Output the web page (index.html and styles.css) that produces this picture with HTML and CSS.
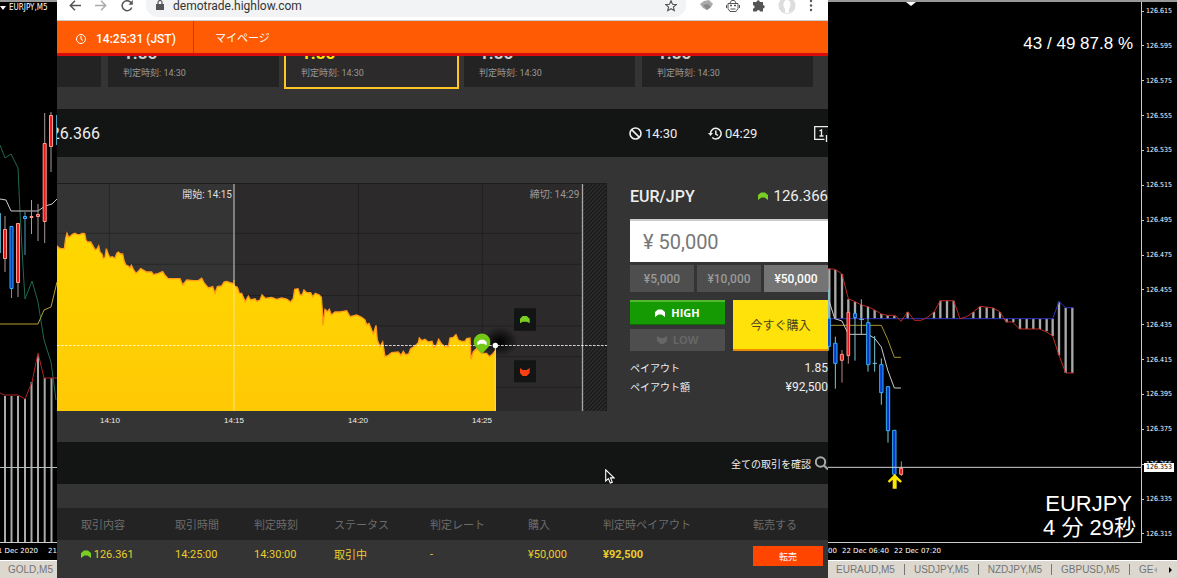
FILE: index.html
```html
<!DOCTYPE html>
<html lang="ja">
<head>
<meta charset="utf-8">
<title>EURJPY M5</title>
<link rel="stylesheet" href="styles.css">
</head>
<body>
<svg class="defs" aria-hidden="true">
  <symbol id="up" viewBox="0 0 10 8"><path d="M0 3L3 0.5H7L10 3V8L6.5 5.500H3.500L0 8Z" fill="currentColor"/></symbol>
  <symbol id="down" viewBox="0 0 10 8"><path d="M0 5L3.500 8H6.500L10 5V0L6.500 2H3.500L0 0Z" fill="currentColor"/></symbol>
</svg>
<div class="desktop">
  <section class="terminal terminal-left">
    <div class="terminal-title"><span class="caret"></span>EURJPY,M5</div>
    <svg class="left-plot" viewBox="0 14 57 528" preserveAspectRatio="xMinYMax slice">
      <g stroke="#aaa" stroke-width="2"><path d="M5 396V542M11.5 396V542M18 396V542M25 399V542M31.5 382V542M38 355V542M44.7 378V542M51.5 378V542"/></g>
      <g fill="none" stroke-width="1">
        <path d="M0 145L5 158L11 154L18 168L20 212L23 267L25 299L32 281L38 302L44 340L51 362L56 400" stroke="#1f6a50"/>
        <path d="M0 199L6 200L11 211H38L45 206L52 204L57 199" stroke="#ccc"/>
        <path d="M0 324H38L44 310L51 307L57 282" stroke="#b5a02c"/>
        <path d="M0 393L4 395H18L25 399L32 382L38 353L44 378H57" stroke="#b02222"/>
        <path d="M0 467.5H57" stroke="#b4bdbd"/>
        <path d="M5 216V272M18 223V297M31.5 200V234M38 204V241M44.7 113V243M51 112V172" stroke="#a99"/>
        <path d="M.5 213V253M11.5 226V298M25 212V255M56.5 115V145" stroke="#4aa0b8"/>
      </g>
      <g fill="#e8191c" stroke="#ff9c90" stroke-width="1"><path d="M3.500 229.500h3v29h-3zM16.500 223.500h3v59h-3zM30 216.500h3v1h-3zM36.500 214.500h3v2h-3zM43.200 143.500h3v78h-3zM49.500 115.500h3v31h-3z"/></g>
      <g fill="#0834cc" stroke="#35b4f0" stroke-width="1"><path d="M10 226.500h3v62h-3zM23.500 216.500h3v2h-3z"/></g>
    </svg>
    <div class="dates"><span>21 Dec 2020</span><span>21</span></div>
    <div class="tabs tabs-left"><a href="#gold">GOLD,M5</a></div>
  </section>

  <main class="browser">
    <div class="toolbar">
      <button class="tool" aria-label="戻る"><svg width="12" height="12" viewBox="0 0 12 12" fill="none" stroke="#555" stroke-width="1.500"><path d="M12 5.500H1.500M6 .8L1.300 5.500L6 10.200"/></svg></button>
      <button class="tool" aria-label="進む"><svg width="12" height="12" viewBox="0 0 12 12" fill="none" stroke="#aaa" stroke-width="1.500"><path d="M0 5.500H10.500M6 .8L10.700 5.500L6 10.200"/></svg></button>
      <button class="tool" aria-label="再読み込み"><svg width="13" height="12" viewBox="0 0 13 12" fill="none" stroke="#555" stroke-width="1.500"><path d="M10.800 7.500A5 5 0 1 1 10 2.500"/><path d="M11.800 0V4.700H7.500Z" fill="#555" stroke="none"/></svg></button>
      <div class="address">
        <svg width="8" height="10" viewBox="0 0 8 10"><path d="M0 4H8V10H0Z" fill="#555"/><path d="M2 4V2.500a2 2 0 0 1 4 0V4" fill="none" stroke="#555" stroke-width="1.200"/></svg>
        <span class="url">demotrade.highlow.com</span>
        <svg width="12" height="12" viewBox="0 0 12 12" fill="none" stroke="#555" stroke-width="1.100"><path d="M6 .8L7.500 4.300L11.200 4.600L8.400 7L9.300 10.700L6 8.700L2.700 10.700L3.600 7L.8 4.600L4.500 4.300Z"/></svg>
      </div>
      <div class="extensions">
        <svg width="13" height="12" viewBox="0 0 13 12"><path d="M0 4L4 1L9 0L13 4L11 7L7 10L3 8Z" fill="#aaa"/><path d="M3 5L8 4L11 7L7 10Z" fill="#888"/></svg>
        <svg width="14" height="12" viewBox="0 0 14 12" fill="none" stroke="#555"><path d="M4 3L5.500 .5H8.500L10 3M2 3.500H12V8.500L10 11.500H4L2 8.500ZM.5 5V8M13.500 5V8M4.500 9H9.500"/><path d="M4 5.500H6M8 5.500H10" stroke-width="1.600"/></svg>
        <svg width="12" height="12" viewBox="0 0 12 12"><path d="M0 2H3.500a1.700 1.700 0 0 1 3.400 0H10V5a1.700 1.700 0 0 1 0 3.400V11.500H7a1.600 1.600 0 0 0-3.200 0H0V8.500a1.600 1.600 0 0 0 0-3.200Z" fill="#555"/></svg>
        <svg width="18" height="14" viewBox="0 0 18 14"><circle cx="9" cy="5.500" r="8.500" fill="#ddd"/><path d="M7 13V9C4.500 6 5 0 9 0s4.500 6 2 9V13Z" fill="#fff"/></svg>
        <svg width="4" height="12" viewBox="0 0 4 12" fill="#555"><circle cx="2" cy="1" r="1.200"/><circle cx="2" cy="5.500" r="1.200"/><circle cx="2" cy="10" r="1.200"/></svg>
      </div>
    </div>

    <header class="site-header">
      <div class="clock"><svg width="10" height="10" viewBox="0 0 10 10" fill="none" stroke="#fff"><circle cx="5" cy="5" r="4.500"/><path d="M5 2V5.300L7 6.300"/></svg>14:25:31 (JST)</div>
      <a class="mypage" href="#mypage">マイページ</a>
    </header>

    <section class="cards">
      <article class="card card-cut"></article>
      <article class="card"><b>1.85</b><span>判定時刻: 14:30</span></article>
      <article class="card card-active"><b>1.85</b><span>判定時刻: 14:30</span></article>
      <article class="card"><b>1.85</b><span>判定時刻: 14:30</span></article>
      <article class="card"><b>1.85</b><span>判定時刻: 14:30</span></article>
    </section>

    <section class="info">
      <div class="info-rate"><span>126.366</span></div>
      <div class="info-time"><svg width="13" height="13" viewBox="0 0 13 13" fill="none" stroke="#eee" stroke-width="1.600"><circle cx="6.500" cy="6.500" r="5.500"/><path d="M2.600 2.600L10.400 10.400"/></svg>14:30</div>
      <div class="info-time"><svg width="14" height="13" viewBox="0 0 14 13" fill="none" stroke="#eee" stroke-width="1.500"><path d="M2.500 6.500A5.300 5.300 0 1 1 4.200 10.500M7.800 3.500V7L10 8.500"/><path d="M0 6H5L2.500 9Z" fill="#eee" stroke="none"/></svg>04:29</div>
      <svg class="click-icon" width="14" height="17" viewBox="0 0 14 17" fill="none" stroke="#eee" stroke-width="1.300"><path d="M14 1.700H.7V14.300H10.500M5.500 6L7.500 4.800V11M5.500 11H9.500M12.500 17V10"/></svg>
    </section>

    <section class="trade">
      <div class="chart">
        <div class="plot">
          <svg class="plot-art" viewBox="171 9 1650 684" preserveAspectRatio="none">
            <defs>
              <linearGradient id="gold" x1="0" y1="0" x2="0" y2="1"><stop offset="0" stop-color="#ffd800"/><stop offset="1" stop-color="#ffc905"/></linearGradient>
              <pattern id="hatch" width="12" height="12" patternUnits="userSpaceOnUse"><rect width="12" height="12" fill="#2d2d2d"/><path d="M-3 3L3 -3M0 12L12 0M9 15L15 9" stroke="#181818" stroke-width="4"/></pattern>
              <radialGradient id="shade"><stop offset="0" stop-color="#000"/><stop offset="1" stop-color="#000" stop-opacity="0"/></radialGradient>
            </defs>
            <rect x="171" y="9" width="531" height="684" fill="#343434"/>
            <rect x="702" y="9" width="1119" height="684" fill="#2c2a2b"/>
            <path d="M171 160H1747M171 253H1747M171 346H1747M171 438H1747M171 530H1747M171 622H1747M328 9V693M1075 9V693M1447 9V693" stroke="#000" stroke-opacity=".25" stroke-width="3"/>
            <rect x="1749" y="9" width="72" height="684" fill="url(#hatch)"/>
            <path d="M171 10.500H1821M1819.500 9V693" stroke="#1d1d1d" stroke-width="3"/>
            <ellipse cx="1500" cy="485" rx="54" ry="45" fill="url(#shade)"/>
            <path fill="url(#gold)" d="M171 197L176 203L183 206H193L197 175L201 160L206 172L212 168L217 163L225 160L232 164H240L246 160L254 161L258 180L262 186H272L280 200L286 210L292 206L296 198L300 216L306 222L310 236L315 232L319 206L324 220L329 232L337 230L345 235L350 220L355 216L362 222H368L373 245L378 255L385 258L390 264L394 256L400 268L408 280L415 274L422 266L430 270L440 276H455L460 284L475 280L488 275L495 286L505 296H540L548 315L560 300L580 302H595L605 295L612 308L620 318L626 324L638 320L645 340L652 320L665 318L672 306L680 304L690 308L698 310L704 318L712 322L718 340H725L736 365L745 348L752 360L765 356L770 364L780 360L786 345L796 355L815 352L830 358L845 354L860 357L872 366L880 355L884 328L894 326L900 345H906L912 330L920 338H932L938 350L946 340L958 345L964 352L967 390L969 436L975 388L982 395L988 388L994 405L1005 396H1020L1040 392L1050 410L1070 405L1085 412L1095 420L1100 434L1107 430L1120 462L1128 436L1132 480L1140 500L1148 486L1155 530L1165 526L1175 518L1195 516L1203 526L1210 514L1216 524L1226 522L1232 506L1245 498L1255 488L1258 474L1265 482L1275 478L1285 486L1296 484L1302 502L1310 494L1316 478L1325 492L1335 500H1345L1350 474L1360 472L1368 464L1375 480L1385 484H1395L1400 476L1410 474L1413 538L1420 515L1430 505L1445 520H1460L1468 530L1478 522L1486 512V693H171Z"/>
            <path fill="none" stroke="#ff9a1c" stroke-width="4" d="M171 197L176 203L183 206H193L197 175L201 160L206 172L212 168L217 163L225 160L232 164H240L246 160L254 161L258 180L262 186H272L280 200L286 210L292 206L296 198L300 216L306 222L310 236L315 232L319 206L324 220L329 232L337 230L345 235L350 220L355 216L362 222H368L373 245L378 255L385 258L390 264L394 256L400 268L408 280L415 274L422 266L430 270L440 276H455L460 284L475 280L488 275L495 286L505 296H540L548 315L560 300L580 302H595L605 295L612 308L620 318L626 324L638 320L645 340L652 320L665 318L672 306L680 304L690 308L698 310L704 318L712 322L718 340H725L736 365L745 348L752 360L765 356L770 364L780 360L786 345L796 355L815 352L830 358L845 354L860 357L872 366L880 355L884 328L894 326L900 345H906L912 330L920 338H932L938 350L946 340L958 345L964 352L967 390L969 436L975 388L982 395L988 388L994 405L1005 396H1020L1040 392L1050 410L1070 405L1085 412L1095 420L1100 434L1107 430L1120 462L1128 436L1132 480L1140 500L1148 486L1155 530L1165 526L1175 518L1195 516L1203 526L1210 514L1216 524L1226 522L1232 506L1245 498L1255 488L1258 474L1265 482L1275 478L1285 486L1296 484L1302 502L1310 494L1316 478L1325 492L1335 500H1345L1350 474L1360 472L1368 464L1375 480L1385 484H1395L1400 476L1410 474L1413 538L1420 515L1430 505L1445 520H1460L1468 530L1478 522L1486 512"/>
            <path d="M1486 500V693" stroke="#ffe79a" stroke-width="3"/>
            <path d="M702 12V300M1747.500 12V693" stroke="#a8a8a8" stroke-width="4"/>
            <path d="M702 300V693" stroke="#ffdf60" stroke-width="4"/>
            <path d="M171 496.500H1821" stroke="#fff" stroke-opacity=".8" stroke-width="3" stroke-dasharray="8 4"/>
            <path d="M1446 522L1425 499a25 25 0 1 1 42 0Z" fill="#74c816"/>
            <path d="M1432 486L1440 479H1452L1460 486V496L1451 491H1441L1432 496Z" fill="#fff"/>
            <circle cx="1486" cy="496.500" r="8" fill="#fff"/>
            <path d="M1542 385h66v67h-66zM1542 541h66v66h-66z" fill="#131514"/>
            <path d="M1560 416L1568 408H1580L1589 416V430L1580 425H1568L1560 430Z" fill="#79cf21"/>
            <path d="M1560 564L1568 570H1580L1589 564V579L1580 588H1568L1560 579Z" fill="#ff4013"/>
          </svg>
          <span class="mark mark-start">開始: 14:15</span>
          <span class="mark mark-close">締切: 14:29</span>
        </div>
        <div class="axis"><span>14:10</span><span>14:15</span><span>14:20</span><span>14:25</span></div>
      </div>

      <form class="order">
        <div class="order-head"><h2>EUR/JPY</h2><span class="order-rate"><svg class="green" width="10" height="8"><use href="#up"/></svg>126.366</span></div>
        <input class="amount" type="text" aria-label="購入金額" value="¥ 50,000">
        <div class="presets"><button type="button">¥5,000</button><button type="button">¥10,000</button><button type="button" class="chosen">¥50,000</button></div>
        <div class="actions">
          <div class="sides">
            <button type="button" class="high"><svg width="10" height="8"><use href="#up"/></svg>HIGH</button>
            <button type="button" class="low"><svg width="10" height="8"><use href="#down"/></svg>LOW</button>
          </div>
          <button type="button" class="buy">今すぐ購入</button>
        </div>
        <dl class="payout"><div><dt>ペイアウト</dt><dd>1.85</dd></div><div><dt>ペイアウト額</dt><dd>¥92,500</dd></div></dl>
      </form>
    </section>

    <section class="history-bar">
      <a href="#history">全ての取引を確認</a>
      <svg width="13" height="14" viewBox="0 0 13 14" fill="none" stroke="#aaa" stroke-width="2"><circle cx="5.500" cy="6" r="4.700"/><path d="M9 9.500L13 13.500"/></svg>
      <svg class="cursor" width="10" height="15" viewBox="0 0 10 15"><path d="M.7 .8V12L3.400 9.600L5.300 14L7.300 13.100L5.500 8.900H9Z" fill="#111" stroke="#fff" stroke-width="1.100"/></svg>
    </section>

    <table class="trades">
      <colgroup><col class="c-item"><col class="c-time"><col class="c-judge"><col class="c-status"><col class="c-rate"><col class="c-buy"><col class="c-pay"><col></colgroup>
      <thead><tr><th>取引内容</th><th>取引時間</th><th>判定時刻</th><th>ステータス</th><th>判定レート</th><th>購入</th><th>判定時ペイアウト</th><th>転売する</th></tr></thead>
      <tbody><tr><td><svg class="green" width="10" height="8"><use href="#up"/></svg> 126.361</td><td>14:25:00</td><td>14:30:00</td><td>取引中</td><td>-</td><td>¥50,000</td><td><b>¥92,500</b></td><td><button class="resell">転売</button></td></tr></tbody>
    </table>
  </main>

  <section class="terminal terminal-right">
    <div class="quote">
      <div class="quote-plot">
        <svg class="quote-art" viewBox="828 2 313 540" preserveAspectRatio="xMinYMax slice">
          <path d="M906 2H916L911 6Z" fill="#fff"/>
          <g transform="translate(820 240) scale(.33333)" fill="none" stroke-width="3">
            <path stroke="#aaa" stroke-width="7" d="M28 86V236M46 90V236M66 102V236M85 178V236M105 185V236M124 195V236M144 200V236M164 210V236M184 222V236M203 226V236M223 228V236M263 216V236M342 216V236M361 182V236M381 182V236M401 182V236M460 216V236M480 200V236M500 202V236M520 204V236M540 216V236M560 236V247M580 236V247M600 236V267M620 236V267M640 236V267M660 236V267M680 236V274M698 236V288M717 185V346M737 203V399M757 203V399"/>
            <path stroke="#2c32b8" d="M24 236H698L717 185L737 203H760"/>
            <path stroke="#c02a22" d="M24 86L46 88L66 102L85 176L105 185L124 195L144 200L164 210L184 222L203 226H226L243 244L263 215L283 241L303 241L322 232L342 216L361 182H401L420 236L440 230L460 216L480 199L520 204L540 216L558 246H578L598 267H658L680 276L698 288L717 346L737 399H760"/>
            <path stroke="#a89431" d="M24 256H184L203 298L223 352H243"/>
            <path stroke="#ccc" d="M28 185L44 236L66 243L85 283H144L164 295L184 321L203 390L223 444H243"/>
            <path stroke="#83c6d4" d="M26 148V332M46 290V446M105 205V362M144 205V395M184 355V494M204 438V608M164 288V395M158 370H171M118 238H132M124 178V282"/>
            <path stroke="#b88" d="M66 330V428M85 210V371M244 664V708"/>
            <g fill="#0834cc" stroke="#35b4f0"><path d="M23 235h8v84h-8zM41 310h10v60h-10zM101 220h8v13h-8zM140 248h10v126h-10zM179 374h10v84h-10zM199 440h10v132h-10zM218 571h10v132h-10z"/></g>
            <g fill="#e8191c" stroke="#ff9c90"><path d="M61 343h9v18h-9zM81 217h8v130h-8zM239 685h9v18h-9z"/></g>
            <path stroke="#d0d0d0" d="M24 682H963"/>
            <path fill="#ffe700" stroke="none" d="M224 702L246 724L241 728L230 719V746H218V719L208 728L203 724Z"/>
          </g>
        </svg>
        <p class="score">43 / 49 87.8 %</p>
        <p class="countdown"><span class="pair">EURJPY</span>4 分 29秒</p>
      </div>
      <ol class="prices">
        <li>126.615</li><li>126.595</li><li>126.575</li><li>126.555</li><li>126.535</li><li>126.515</li><li>126.495</li><li>126.475</li><li>126.455</li><li>126.435</li><li>126.415</li><li>126.395</li><li>126.375</li><li class="live">126.355<strong>126.353</strong></li><li>126.335</li><li>126.315</li>
      </ol>
    </div>
    <div class="dates dates-right"><span>00</span><span>22 Dec 06:40</span><span>22 Dec 07:20</span></div>
    <div class="tabs"><a href="#euraud">EURAUD,M5</a><i></i><a href="#usdjpy">USDJPY,M5</a><i></i><a href="#nzdjpy">NZDJPY,M5</a><i></i><a href="#gbpusd">GBPUSD,M5</a><i></i><a href="#ge">GE</a>
      <span class="scroll"><button class="prev" aria-label="前へ"></button><button class="next" aria-label="次へ"></button></span></div>
  </section>
</div>
</body>
</html>
```

FILE: styles.css
```css
* { box-sizing: border-box; }
body {
  margin: 0;
  background: #000;
  color: #eee;
  font-family: Roboto, "Noto Sans CJK JP", sans-serif;
  font-size: 12px;
}
button, input { font: inherit; border: 0; padding: 0; margin: 0; }
a { color: inherit; text-decoration: none; }
svg { display: block; flex: none; }
p, h2, dl, dd, ol { margin: 0; padding: 0; }
.defs { position: absolute; width: 0; height: 0; }
.green { color: #79cf21; }

.desktop {
  display: grid;
  grid-template-columns: 57px minmax(0, 1fr) 349px;
  height: 100vh;
  overflow: hidden;
}

/* Trading terminal behind the browser */
.terminal {
  display: flex;
  flex-direction: column;
  min-width: 0;
  overflow: hidden;
  border-top: 2px solid #999;
  background: #000;
}
.terminal-title {
  display: flex;
  align-items: center;
  gap: 3px;
  height: 12px;
  font: 8px/12px "DejaVu Sans Condensed", "DejaVu Sans", sans-serif;
  color: #fff;
}
.caret { border: 3px solid transparent; border-top: 4px solid #fff; border-bottom: 0; }
.left-plot { flex: 1; width: 100%; min-height: 0; border-bottom: 1px solid #ccc; }
.dates {
  display: flex;
  justify-content: flex-end;
  gap: 10px;
  height: 17px;
  overflow: hidden;
  white-space: nowrap;
  font: 7px/16px "DejaVu Sans", sans-serif;
  color: #fff;
}
.dates-right { justify-content: flex-start; gap: 5px; }
.tabs {
  display: flex;
  align-items: center;
  height: 18px;
  padding-left: 8px;
  border-top: 1px solid #fff;
  background: #dcd8d0;
  color: #747474;
  font: 10px/16px "Liberation Sans", Arial, sans-serif;
  white-space: nowrap;
}
.tabs i { width: 1px; height: 11px; margin: 0 9px; background: #777; }
.scroll { display: flex; gap: 12px; margin-left: auto; padding-right: 5px; }
.scroll button { width: 3px; height: 6px; border: 3px solid transparent; background: none; }
.scroll .prev { border-left: 0; border-right-color: #aaa; }
.scroll .next { border-right: 0; border-left-color: #000; }

.quote { display: flex; flex: 1; min-height: 0; }
.quote-plot { position: relative; flex: 1; border-bottom: 1px solid #ccc; }
.quote-art { width: 100%; height: 100%; }
.score, .countdown { position: absolute; right: 8px; color: #fff; text-align: right; }
.score { top: 32px; font: 17px/20px "Liberation Sans", Arial, sans-serif; }
.countdown { bottom: 2px; right: 5px; font: 22px/24px "Liberation Sans", "Noto Sans CJK JP", sans-serif; }
.pair { display: block; padding-right: 4px; }
.prices {
  display: flex;
  flex-direction: column;
  justify-content: space-between;
  width: 36px;
  padding: 4px 0;
  border-left: 1px solid #ccc;
  list-style: none;
  font: 7px/10px "DejaVu Sans Condensed", "DejaVu Sans", sans-serif;
  color: #fff;
}
.prices li { display: flex; align-items: center; gap: 2px; }
.prices li::before { content: ""; width: 2px; height: 1px; background: #ccc; }
.live { position: relative; }
.live strong {
  position: absolute;
  top: 4px;
  left: 2px;
  padding: 0 2px;
  background: #fff;
  color: #000;
  font-weight: 400;
  line-height: 9px;
}

/* Browser window */
.browser { background: #343434; min-width: 0; overflow: hidden; }
.toolbar {
  display: flex;
  align-items: flex-start;
  gap: 14px;
  height: 21px;
  padding-left: 12px;
  border-bottom: 1px solid #ccc;
  background: #fff;
}
.tool { background: none; }
.address {
  display: flex;
  flex: 1;
  gap: 9px;
  height: 17px;
  margin-left: -2px;
  padding: 0 9px 0 10px;
  border-radius: 0 0 12px 12px;
  background: #f1f3f4;
}
.url { flex: 1; color: #333; font-size: 12px; line-height: 12px; }
.extensions { display: flex; gap: 13px; width: 128px; }

.site-header {
  display: flex;
  align-items: stretch;
  height: 35px;
  border-bottom: 3px solid #dc0c0c;
  background: #ff5b05;
  color: #fff;
}
.clock {
  display: flex;
  align-items: center;
  gap: 10px;
  width: 137px;
  padding: 4px 0 0 19px;
  border-right: 1px solid #d03a00;
  font-size: 12px;
  font-weight: 500;
}
.mypage { padding: 4px 21px 0; font-size: 11px; line-height: 28px; }

.cards { display: flex; gap: 7px; height: 53px; padding: 0 15px 22px 0; overflow: hidden; }
.card {
  display: flex;
  flex: 1;
  flex-direction: column;
  justify-content: flex-end;
  height: 31px;
  padding: 0 15px 6px;
  overflow: hidden;
  background: #232323;
  color: #999;
  font-size: 9px;
  line-height: 16px;
}
.card b { font-size: 17px; line-height: 24px; color: #ccc; }
.card-cut { flex: none; width: 44px; padding: 0; }
.card-active { background: #2c2a2b; box-shadow: 0 0 0 2px #ffc526; }
.card-active b { color: #ffe20a; }

.info { display: flex; align-items: center; height: 48px; background: #131514; font-size: 13px; }
.info-rate { display: flex; flex: none; justify-content: flex-end; width: 43px; overflow: hidden; font-size: 16px; }
.info-time { display: flex; align-items: center; gap: 3px; width: 79px; }
.info-rate + .info-time { margin-left: auto; }
.click-icon { margin-left: 27px; }

.trade { display: flex; gap: 23px; padding-top: 26px; height: 285px; }
.chart { flex: 1; min-width: 0; }
.plot { position: relative; height: 228px; }
.plot-art { width: 100%; height: 100%; }
.mark { position: absolute; top: 5px; color: #ddd; font-size: 10px; line-height: 14px; }
.mark-start { right: 68%; padding-right: 1px; }
.mark-close { right: 5%; color: #999; }
.axis { display: flex; gap: 102px; padding-left: 42px; font: 8px/20px "Liberation Sans", Arial, sans-serif; }
.axis span { width: 22px; text-align: center; }

.order { width: 198px; white-space: nowrap; }
.order-head { display: flex; align-items: center; justify-content: space-between; height: 26px; margin-bottom: 10px; }
.order h2 { font-size: 16px; font-weight: 500; }
.order-rate { display: flex; align-items: center; gap: 5px; font-size: 15px; }
.amount {
  width: 100%;
  height: 43px;
  padding-left: 13px;
  border-top: 2px solid #ccc;
  background: #fff;
  color: #777;
  font-size: 20px;
}
.presets { display: grid; grid-template-columns: repeat(3, 1fr); gap: 3px; margin-top: 3px; }
.presets button { height: 27px; background: #4e4e4e; color: #999; font-size: 12px; font-weight: 500; }
.presets .chosen { background: #747474; color: #fff; }
.actions { display: grid; grid-template-columns: 1fr 1fr; gap: 8px; margin-top: 8px; height: 51px; }
.sides { display: grid; gap: 4px; }
.sides button {
  display: flex;
  align-items: center;
  justify-content: center;
  gap: 6px;
  font: 700 11px/16px "Open Sans", sans-serif;
}
.sides .high { border-top: 2px solid #54b82c; border-bottom: 1px solid #0d6a04; background: #159a04; color: #fff; }
.low { background: #4e4e4e; color: #666; }
.buy { border-bottom: 2px solid #f08c00; background: #ffe20a; color: #4a4520; font-size: 12px; }
.payout { margin-top: 8px; }
.payout div { display: flex; justify-content: space-between; height: 19px; line-height: 19px; }
.payout dt { font-size: 10px; }
.payout dd { font-size: 12px; }

.history-bar {
  position: relative;
  display: flex;
  align-items: center;
  justify-content: flex-end;
  gap: 4px;
  height: 42px;
  margin-bottom: 24px;
  background: #131514;
  font-size: 10px;
}
.cursor { position: absolute; left: 548px; top: 27px; }

.trades { width: 100%; table-layout: fixed; border-collapse: collapse; font-size: 11px; white-space: nowrap; }
.trades th { height: 32px; padding: 0; background: #232323; color: #6c6c6c; font-weight: 400; text-align: left; }
.trades td { height: 28px; padding: 0; color: #ebcd2c; }
.trades th:first-child, .trades td:first-child { padding-left: 24px; }
.trades td svg { display: inline-block; }
.c-item { width: 118px; }
.c-time { width: 79px; }
.c-judge { width: 80px; }
.c-status { width: 96px; }
.c-rate { width: 98px; }
.c-buy { width: 75px; }
.c-pay { width: 150px; }
.resell { display: block; width: 70px; height: 20px; margin-top: 4px; background: #ff4500; color: #fff; font-size: 9px; }
```
